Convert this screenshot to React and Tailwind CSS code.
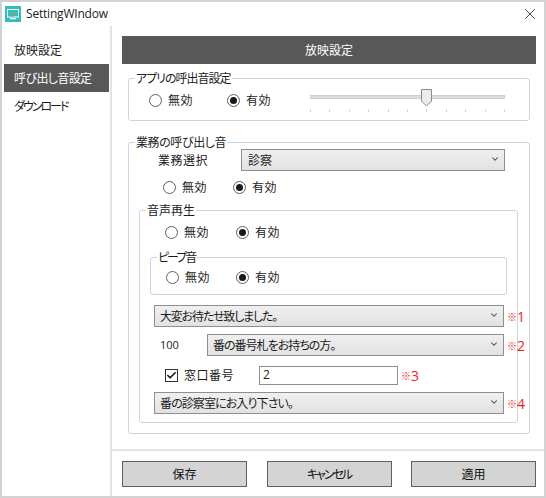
import React from 'react';
import { X, ChevronDown, Check } from 'lucide-react';

const jp = 'font-["Noto_Sans_CJK_JP","Noto_Sans",sans-serif] [font-feature-settings:"palt"]';

const Radio = ({ label, checked }) => (
  <div className="flex items-center gap-[6px]">
    <span className="w-[13px] h-[13px] rounded-full border border-[#5f5f5f] bg-white flex items-center justify-center shrink-0">
      {checked && <span className="w-[7px] h-[7px] rounded-full bg-[#1a1a1a]" />}
    </span>
    <span className="leading-4 tracking-[0.5px]">{label}</span>
  </div>
);

const RadioPair = ({ className = '', gap = 'w-[70px]' }) => (
  <div className={`flex items-center h-4 ${className}`}>
    <div className={gap}><Radio label="無効" /></div>
    <Radio label="有効" checked />
  </div>
);

const Select = ({ label, className = '', textClass = '' }) => (
  <div className={`h-[22px] shrink-0 border border-[#8f8f8f] bg-gradient-to-b from-[#f0f0f0] to-[#e2e2e2] flex items-center justify-between pl-[5px] pr-[4px] ${className}`}>
    <span className={`leading-4 whitespace-nowrap ${textClass}`}>{label}</span>
    <ChevronDown className="w-[10px] h-[10px] text-[#444] -mt-[2px]" strokeWidth={2.5} />
  </div>
);

const Note = ({ n }) => (
  <span className="flex items-center text-[#f52020] leading-4 whitespace-nowrap pt-[1px]">
    <span className="text-[10px] font-bold">※</span>
    <span className="text-[14px] font-medium font-['Open_Sans',sans-serif]">{n}</span>
  </span>
);

const Group = ({ title, className = '', titleClass = '', children }) => (
  <fieldset className={`min-w-0 border border-[#c9d6e2] rounded-[3px] ${className}`}>
    <legend className={`ml-[6px] px-[1px] leading-[14px] ${titleClass}`}>{title}</legend>
    {children}
  </fieldset>
);

const Btn = ({ label, textClass = '' }) => (
  <button className={`w-[125px] h-[26px] border border-[#5f5f5f] bg-[#d4d4d4] text-[12px] leading-4 text-[#111] ${textClass}`}>{label}</button>
);

const App = () => {
  return (
    <div className={`w-[546px] h-[498px] border-2 border-[#d2d2d2] bg-white flex flex-col text-[12px] text-[#1c1c1c] ${jp}`}>
      {/* Title bar */}
      <div className="h-6 shrink-0 flex items-start justify-between pl-[3px] pr-[5px] pt-[3px]">
        <div className="flex items-center gap-[5px]">
          <svg width="16" height="16" viewBox="0 0 16 16">
            <rect width="16" height="16" fill="#2fbfc0" />
            <rect x="2" y="3" width="12" height="8.5" fill="#fff" />
            <rect x="3" y="4" width="10" height="6.5" fill="#2fbfc0" />
            <rect x="5" y="12" width="6" height="1.2" fill="#fff" />
            <path d="M6 10.5 L8.5 9.5 L8.5 7 L10 6.5" stroke="#f08020" strokeWidth="1.2" fill="none" />
          </svg>
          <span className="font-['Open_Sans',sans-serif] text-[12px] tracking-[-0.2px]">SettingWIndow</span>
        </div>
        <X className="w-[18px] h-[18px] text-[#111]" strokeWidth={1} />
      </div>

      <div className="flex-1 flex min-h-0">
        {/* Sidebar */}
        <div className="w-[110px] shrink-0 border-r-2 border-[#e2e2e2] pt-[10px] pl-[2px] pr-[1px]">
          <div className="h-7 flex items-center pl-[10px]">放映設定</div>
          <div className="h-7 flex items-center pl-[10px] bg-[#585858] text-white tracking-[-0.6px]">呼び出し音設定</div>
          <div className="h-7 flex items-center pl-[10px] tracking-[-2px]">ダウンロード</div>
        </div>

        {/* Main */}
        <div className="flex-1 min-w-0 flex flex-col">
          <div className="flex-1 min-h-0 pt-[10px] pl-[10px] pr-2">
            <div className="h-7 bg-[#585858] text-white flex items-center justify-center">放映設定</div>

            <Group title="アプリの呼出音設定" titleClass="tracking-[-1px]" className="mt-[7px] mx-[6px] h-[50px]">
              <div className="flex items-center h-[30px] pl-5 pr-6">
                <div className="w-[78px]"><Radio label="無効" /></div>
                <Radio label="有効" checked />
                <div className="ml-auto w-[195px] relative h-[30px]">
                  <div className="absolute left-0 right-0 top-[10px] h-[4px] bg-[#dcdcdc] border border-[#cfcfcf]" />
                  <svg className="absolute left-[111px] top-[4px]" width="12" height="18" viewBox="0 0 12 18">
                    <path d="M0.5 0.5 H10.5 V12 L5.5 17 L0.5 12 Z" fill="#ececec" stroke="#8a8a8a" />
                  </svg>
                  <div className="absolute left-0 right-0 top-[24px] flex justify-between">
                    {[0, 1, 2, 3, 4, 5, 6, 7, 8, 9, 10].map(i => (
                      <span key={i} className="w-px h-[3px] bg-[#d4d4d4]" />
                    ))}
                  </div>
                </div>
              </div>
            </Group>

            <Group title="業務の呼び出し音" titleClass="tracking-[-0.4px]" className="mt-[14px] mx-[6px] h-[299px]">
              <div className="flex items-center h-[22px] pl-[29px]">
                <span className="w-[83px] tracking-[0.5px]">業務選択</span>
                <Select label="診察" className="w-[264px] pl-[6px]" />
              </div>
              <RadioPair className="mt-2 ml-[34px]" />

              <Group title="音声再生" className="mt-2 ml-[10px] mr-[11px] h-[220px]">
                <RadioPair className="mt-[7px] ml-[25px]" gap="w-[71px]" />
                <Group title="ピープ音" titleClass="tracking-[-2px]" className="mt-[10px] ml-[10px] mr-[10px] h-[45px]">
                  <RadioPair className="mt-[5px] ml-[15px]" />
                </Group>

                <div className="mt-[10px] ml-[14px] flex flex-col">
                  <div className="flex items-center gap-[3px]">
                    <Select label="大変お待たせ致しました。" textClass="tracking-[-1.2px]" className="w-[350px]" />
                    <Note n="1" />
                  </div>
                  <div className="flex items-center mt-[7px]">
                    <span className="w-[53px] shrink-0 pl-[6px] font-['Open_Sans',sans-serif] text-[11px]">100</span>
                    <Select label="番の番号札をお持ちの方。" textClass="tracking-[-1px]" className="w-[297px] mr-[3px]" />
                    <Note n="2" />
                  </div>
                  <div className="flex items-center h-[20px] mt-[9px]">
                    <span className="ml-[11px] w-[13px] h-[13px] shrink-0 border border-[#333] bg-white flex items-center justify-center">
                      <Check className="w-[11px] h-[11px] text-[#111]" strokeWidth={3.5} />
                    </span>
                    <span className="ml-[6px] w-[75px] shrink-0 tracking-[0.5px]">窓口番号</span>
                    <div className="w-[139px] h-[19px] shrink-0 border border-[#8f8f8f] pl-[3px] flex items-center font-['Open_Sans',sans-serif]">2</div>
                    <span className="ml-[3px]"><Note n="3" /></span>
                  </div>
                  <div className="flex items-center gap-[3px] mt-[7px]">
                    <Select label="番の診察室にお入り下さい。" textClass="tracking-[-0.9px]" className="w-[350px]" />
                    <Note n="4" />
                  </div>
                </div>
              </Group>
            </Group>
          </div>

          {/* Footer */}
          <div className="h-[47px] shrink-0 border-t-2 border-[#e2e2e2] pt-[10px] pl-[10px] pr-2 flex justify-between">
            <Btn label="保存" />
            <Btn label="キャンセル" textClass="tracking-[-2px]" />
            <Btn label="適用" />
          </div>
        </div>
      </div>
    </div>
  );
};

export default App;
